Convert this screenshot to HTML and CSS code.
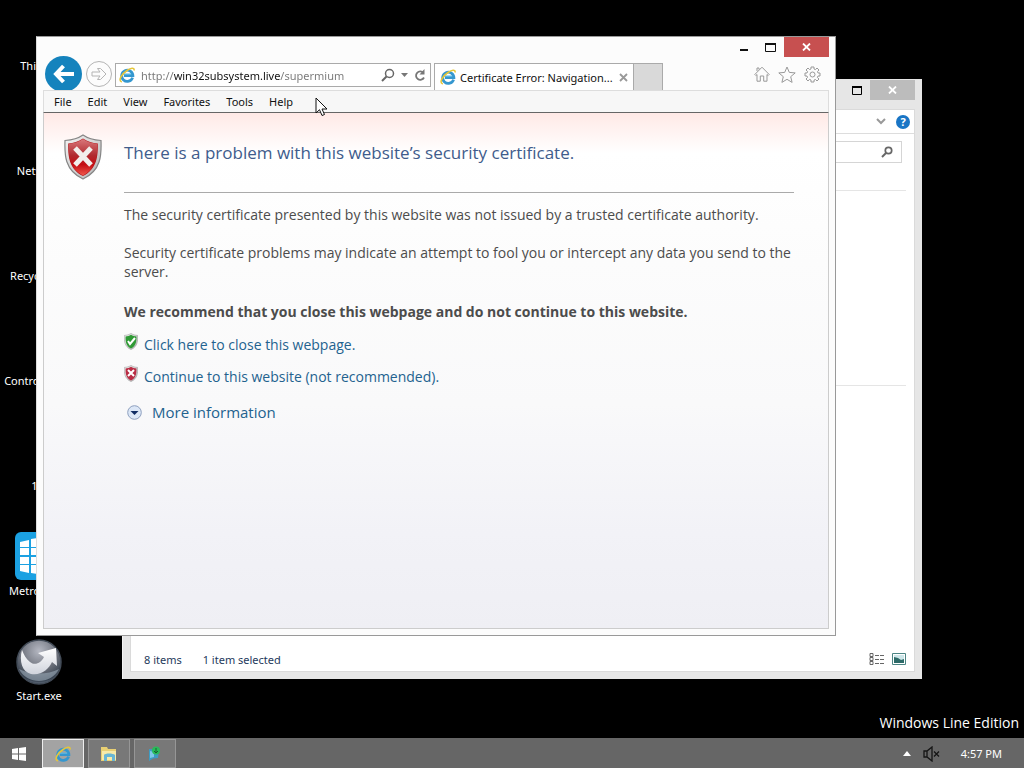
FILE: index.html
```html
<!DOCTYPE html>
<html lang="en">
<head>
  <meta charset="UTF-8">
  <meta name="viewport" content="width=device-width, initial-scale=1.0">
  <title>Certificate Error: Navigation Blocked</title>
  <link rel="stylesheet" href="styles.css">
</head>
<body>

  <!-- Shared icons -->
  <svg class="defs" width="0" height="0" aria-hidden="true">
    <defs>
      <linearGradient id="redFill" x1="0" y1="0" x2="0" y2="1">
        <stop offset="0" stop-color="#d9777a"/><stop offset="0.45" stop-color="#b02a2f"/><stop offset="0.7" stop-color="#c40d12"/><stop offset="1" stop-color="#f0584c"/>
      </linearGradient>
      <linearGradient id="rim" x1="0" y1="0" x2="1" y2="1">
        <stop offset="0" stop-color="#f4f4f4"/><stop offset="1" stop-color="#b4b4b4"/>
      </linearGradient>
      <radialGradient id="orb" cx="0.5" cy="0.25" r="0.8">
        <stop offset="0" stop-color="#b5b8c2"/><stop offset="0.5" stop-color="#71757f"/><stop offset="0.85" stop-color="#36414f"/><stop offset="1" stop-color="#8a98a8"/>
      </radialGradient>
      <linearGradient id="arrow" x1="0" y1="0" x2="0" y2="1">
        <stop offset="0" stop-color="#ffffff"/><stop offset="1" stop-color="#cfd3dc"/>
      </linearGradient>
      <symbol id="ie" viewBox="0 0 16 16">
        <path d="M13.6 10.6A5.6 5.6 0 1 1 13.9 8.7H5" fill="none" stroke="#3597cf" stroke-width="2.8"/>
        <path d="M4.6 7.2h7.6" stroke="#55b4e2" stroke-width="1.4"/>
        <path d="M2.2 14.6C-.8 13.4 2.6 7 8 3.5c4-2.6 7.2-3 7.1-.6" fill="none" stroke="#e5c63a" stroke-width="1.6" stroke-linecap="round"/>
      </symbol>
      <symbol id="shield" viewBox="0 0 38 46">
        <path d="M19 1C14 4.500 8 6 1 6.500c-.5 14-.5 30 18 38.500C37.500 36.500 37.500 20.500 37 6.500 30 6 24 4.500 19 1z" fill="url(#rim)" stroke="#858585" stroke-width="1.200"/>
        <path d="M19 4.500C14.500 7.500 9.500 9 4.200 9.400 4 22 5 35 19 42c14-7 15-20 14.800-32.600C28.500 9 23.500 7.500 19 4.500z" fill="currentColor"/>
      </symbol>
    </defs>
  </svg>

  <main class="desktop">

    <!-- Desktop shortcuts -->
    <ul class="shortcuts">
      <li><span class="pic"></span>This PC</li>
      <li><span class="pic"></span>Network</li>
      <li><span class="pic"></span>Recycle Bin</li>
      <li><span class="pic"></span>Control Panel</li>
      <li><span class="pic"></span>1.0</li>
      <li>
        <svg class="pic" viewBox="0 0 48 48"><rect width="48" height="48" rx="6" fill="#1ba1e2"/><path d="M5 10l9-2v7H5zM5 16h9v7H5zM5 25h9v7H5zM5 33h9v8l-9-2zM16 7l26-4v12H16zM16 16h26v7H16zM16 25h26v7H16zM16 33h26v12l-26-4z" fill="#fff"/></svg>
        Metro Apps
      </li>
      <li>
        <svg class="pic" viewBox="0 0 48 48">
          <circle cx="24" cy="25" r="22" fill="url(#orb)" stroke="#424b57" stroke-width="1.500"/>
          <path d="M4 32c8 16 32 16 40 0-12 6-28 6-40 0z" fill="#9dabb9" opacity=".6"/>
          <path d="M7 13C4 24 7 35 16 37c10 2 18-5 21-12l5 4-1-18-18 5 6 4c-3 6-9 9-14 5-4-3-6-7-8-12z" fill="url(#arrow)"/>
        </svg>
        Start.exe
      </li>
    </ul>

    <!-- File Explorer -->
    <section class="window explorer" aria-label="File Explorer">
      <div class="titlebar">
        <button class="caption" aria-label="Maximize"><svg width="10" height="9"><path d="M.5 1h9v7.500h-9z" fill="none" stroke="#000"/><path d="M0 1h10" stroke="#000" stroke-width="2"/></svg></button>
        <button class="caption close" aria-label="Close"><svg width="9" height="8"><path d="M1 .5l7 7M8 .5l-7 7" stroke="#fff" stroke-width="1.800"/></svg></button>
      </div>
      <div class="explorer-body">
        <div class="ribbon">
          <button class="icon-btn" aria-label="Expand the Ribbon"><svg width="10" height="7"><path d="M1 1l4 4 4-4" fill="none" stroke="#999" stroke-width="2"/></svg></button>
          <button class="icon-btn help" aria-label="Help">?</button>
        </div>
        <div class="search-row">
          <label class="search"><input type="search" aria-label="Search"><svg width="12" height="12"><circle cx="7.500" cy="4.500" r="3.200" fill="none" stroke="#666" stroke-width="1.700"/><path d="M5 7l-4 4" stroke="#666" stroke-width="2"/></svg></label>
        </div>
        <div class="group"></div>
        <div class="files"></div>
        <footer class="status">
          <span>8 items</span>
          <span>1 item selected</span>
          <button class="icon-btn details" aria-label="Details view"><svg width="16" height="13"><path d="M1 .5h3v3H1zM1 4.500h3v3H1zM1 8.500h3v3H1z" fill="none" stroke="#666"/><path d="M6 2.500h10M6 6.500h10M6 10.500h10" stroke="#666" stroke-dasharray="4 1"/></svg></button>
          <button class="icon-btn" aria-label="Large icons view"><svg width="14" height="12"><path d="M.5.500h13v11H.5z" fill="#fff" stroke="#4c8584"/><path d="M2 2h10v8H2z" fill="#cde6e9"/><path d="M2 4l4 1 3 2 3-1v4H2z" fill="#2d6a68"/></svg></button>
        </footer>
      </div>
    </section>

    <!-- Internet Explorer -->
    <section class="window browser" aria-label="Internet Explorer">
      <div class="titlebar">
        <button class="caption" aria-label="Minimize"><svg width="8" height="10"><path d="M0 8h8" stroke="#111" stroke-width="2"/></svg></button>
        <button class="caption" aria-label="Maximize"><svg width="11" height="9"><path d="M.5 1h10v7.500H.5z" fill="none" stroke="#111"/><path d="M0 1h11" stroke="#111" stroke-width="2"/></svg></button>
        <button class="caption close" aria-label="Close"><svg width="9" height="8"><path d="M1 .5l7 7M8 .5l-7 7" stroke="#fff" stroke-width="1.800"/></svg></button>
      </div>

      <div class="nav">
        <button class="back" aria-label="Back"><svg width="22" height="20" viewBox="0 0 22 20"><path d="M10.500 2L3 10l7.500 8M3 10h18" fill="none" stroke="#fff" stroke-width="4"/></svg></button>
        <button class="forward" aria-label="Forward"><svg width="16" height="14" viewBox="0 0 16 14"><path d="M1 5h8L6.500 1.500h3L15 7l-5.500 5.500h-3L9 9H1z" fill="none" stroke="#b4b4b4"/></svg></button>
        <div class="address">
          <svg width="16" height="16"><use href="#ie"/></svg>
          <input type="text" aria-label="Address" value="http://win32subsystem.live/supermium">
          <button class="icon-btn" aria-label="Search"><svg width="14" height="14"><circle cx="8.500" cy="5.500" r="4" fill="none" stroke="#666" stroke-width="1.500"/><path d="M5.500 8.500l-4.500 4.500" stroke="#666" stroke-width="2"/></svg></button>
          <button class="icon-btn" aria-label="Show address list"><svg width="7" height="4"><path d="M0 0h7L3.500 4z" fill="#777"/></svg></button>
          <button class="icon-btn" aria-label="Refresh"><svg width="12" height="13"><path d="M9.500 4A4.200 4.200 0 1 0 10 8.500" fill="none" stroke="#777" stroke-width="1.800"/><path d="M10.500 0v5.500H5.500z" fill="#777"/></svg></button>
        </div>
        <div class="tab">
          <svg width="16" height="16"><use href="#ie"/></svg>
          <span>Certificate Error: Navigation...</span>
          <button class="icon-btn" aria-label="Close tab"><svg width="9" height="9"><path d="M1 1l7 7M8 1L1 8" stroke="#999" stroke-width="1.800"/></svg></button>
        </div>
        <button class="new-tab" aria-label="New tab"></button>
        <div class="tools">
          <button class="icon-btn" aria-label="Home"><svg width="16" height="16"><path d="M.8 8.500L8 1.200l7.200 7.300-1 1-1.200-1v6.700H9.700V10H6.300v5.200H3V8.500l-1.200 1zM3 5V2h2v1.500" fill="none" stroke="#999"/></svg></button>
          <button class="icon-btn" aria-label="Favorites"><svg width="18" height="17"><path d="M9 1l2.300 5.400 5.900.5-4.500 3.800 1.400 5.700L9 13.300l-5.100 3.100 1.400-5.700L.8 6.900l5.900-.5z" fill="none" stroke="#999"/></svg></button>
          <button class="icon-btn" aria-label="Tools"><svg width="17" height="17"><path d="M7 1h3v2l1.500.6L13 2l2 2-1.500 1.600.6 1.400H16v3h-2l-.6 1.500L15 13l-2 2-1.500-1.500-1.500.6V16H7v-2l-1.500-.6L4 15l-2-2 1.500-1.500L3 10H1V7h2l.6-1.500L2 4l2-2 1.500 1.500L7 3z" fill="none" stroke="#999"/><circle cx="8.500" cy="8.500" r="2.500" fill="none" stroke="#999"/></svg></button>
        </div>
      </div>

      <div class="menubar">
        <button>File</button>
        <button>Edit</button>
        <button>View</button>
        <button>Favorites</button>
        <button>Tools</button>
        <button>Help</button>
      </div>

      <div class="page">
        <svg class="big-shield" width="38" height="46" viewBox="0 0 38 46"><use href="#shield" color="#b5161b"/><path d="M19 5C14.500 8 9.500 9.500 4.700 9.800 4.500 22 5.500 34.500 19 41.500 32.500 34.500 33.500 22 33.300 9.800 28.500 9.500 23.500 8 19 5z" fill="url(#redFill)"/><path d="M11 14l16 17M27 14L11 31" stroke="#f2efec" stroke-width="5"/></svg>
        <div class="message">
          <h1>There is a problem with this website’s security certificate.</h1>
          <hr>
          <p>The security certificate presented by this website was not issued by a trusted certificate authority.</p>
          <p>Security certificate problems may indicate an attempt to fool you or intercept any data you send to the server.</p>
          <p class="advice">We recommend that you close this webpage and do not continue to this website.</p>
          <div class="choice">
            <svg width="14" height="17"><use href="#shield" color="#2f9a35"/><path d="M4 8l2 3 5-6" fill="none" stroke="#fff" stroke-width="2"/></svg>
            <a href="#close">Click here to close this webpage.</a>
          </div>
          <div class="choice">
            <svg width="14" height="17"><use href="#shield" color="#b92c44"/><path d="M4 5l6 6M10 5l-6 6" stroke="#fff" stroke-width="2"/></svg>
            <a href="#continue">Continue to this website (not recommended).</a>
          </div>
          <div class="more">
            <svg width="15" height="15"><circle cx="7.500" cy="7.500" r="6.800" fill="#dce7f7" stroke="#8d9fbe"/><path d="M3.500 6h8l-4 4z" fill="#102c64"/></svg>
            <a href="#more">More information</a>
          </div>
        </div>
      </div>
    </section>

    <div class="edition">Windows Line Edition</div>

    <svg class="pointer" width="13" height="20"><path d="M1 1v15l3.500-3.300L7 18.500l2.500-1L7 12h5z" fill="#fff" stroke="#111"/></svg>
  </main>

  <!-- Taskbar -->
  <nav class="taskbar" aria-label="Taskbar">
    <button class="start" aria-label="Start"><svg width="14" height="14"><path d="M0 2l6-1v5.500H0zM7 1l7-1v6.500H7zM0 7.500h6V13l-6-1zM7 7.500h7V14l-7-1z" fill="#fff"/></svg></button>
    <button class="task active" aria-label="Internet Explorer"><svg width="16" height="16"><use href="#ie"/></svg></button>
    <button class="task" aria-label="File Explorer"><svg width="18" height="16"><path d="M1 1h6l1 2h8v12H1z" fill="#e8cf73"/><path d="M2 5h14v9H2z" fill="#f7eaa9"/><path d="M4 15V9c1-2 9-2 11 0v6h-3v-4H7v4z" fill="#68b6d5"/></svg></button>
    <button class="task" aria-label="Supermium"><svg width="16" height="16"><path d="M2 3l10 1-1 8-5 .5L2 15z" fill="#3d9cc4"/><path d="M3 5l4 1v5l-4 1z" fill="#7cc8e6"/><circle cx="9" cy="4.500" r="4" fill="#28bb5a"/><path d="M9 2v5M7 5l2 2 2-2" fill="none" stroke="#17602f"/></svg></button>
    <div class="tray">
      <button class="icon-btn" aria-label="Show hidden icons"><svg width="8" height="5"><path d="M0 5h8L4 0z" fill="#fff"/></svg></button>
      <button class="icon-btn" aria-label="Volume muted"><svg width="17" height="16"><path d="M1 5h3l5-4v14l-5-4H1zM4 5v6" fill="none" stroke="#151515" stroke-width="1.300"/><path d="M11 5.500l5 5M16 5.500l-5 5" stroke="#151515" stroke-width="1.300"/></svg></button>
      <time datetime="16:57">4:57 PM</time>
    </div>
  </nav>

</body>
</html>
```
FILE: styles.css
```css
* {
  box-sizing: border-box;
}
body {
  margin: 0;
  height: 100vh;
  display: flex;
  flex-direction: column;
  overflow: hidden;
  background: #000;
  color: #111;
  font-family: "Noto Sans", "Open Sans", sans-serif;
  font-size: 11px;
}
button {
  display: flex;
  align-items: center;
  justify-content: center;
  padding: 0;
  border: none;
  background: none;
  color: inherit;
  font: inherit;
}
input {
  min-width: 0;
  padding: 0;
  border: none;
  outline: none;
  background: none;
  font: inherit;
}
svg {
  display: block;
  flex: none;
}
.defs {
  position: absolute;
}

/* Desktop */
.desktop {
  position: relative;
  flex: 1;
}
.shortcuts {
  display: flex;
  flex-direction: column;
  gap: 35px;
  width: 78px;
  margin: 0;
  padding: 7px 0 0;
  list-style: none;
  color: #fff;
  line-height: 22px;
  text-align: center;
  white-space: nowrap;
}
.pic {
  display: block;
  width: 48px;
  height: 48px;
  margin: 0 auto;
}
.edition {
  position: absolute;
  right: 5px;
  bottom: 5px;
  color: #fff;
  font-family: "Open Sans", sans-serif;
  font-size: 14px;
  line-height: 20px;
}
.pointer {
  position: absolute;
  left: 315px;
  top: 97px;
}

/* Windows */
.window {
  position: absolute;
  display: flex;
  flex-direction: column;
}
.titlebar {
  display: flex;
  justify-content: flex-end;
}
.caption {
  width: 27px;
  height: 20px;
}
.close {
  width: 45px;
}

/* File Explorer */
.explorer {
  left: 122px;
  right: 102px;
  top: 79px;
  bottom: 59px;
  padding: 1px 7px 7px;
  border: 1px solid #f4f4f4;
  border-width: 0 0 0 1px;
  background: #e6e6e6;
}
.explorer .caption {
  margin-bottom: 9px;
}
.explorer .close {
  background: #bcbcbc;
}
.explorer-body {
  flex: 1;
  display: flex;
  flex-direction: column;
  border: 1px solid #dadada;
  background: #fff;
}
.ribbon {
  display: flex;
  align-items: center;
  justify-content: flex-end;
  gap: 10px;
  height: 24px;
  padding-right: 4px;
  border-bottom: 1px solid #ddd;
}
.help {
  width: 14px;
  height: 14px;
  border-radius: 50%;
  background: #1975c5;
  color: #fff;
  font-weight: bold;
}
.search-row {
  display: flex;
  justify-content: flex-end;
  padding: 7px 12px 0;
}
.search {
  display: flex;
  align-items: center;
  height: 22px;
  padding-right: 8px;
  border: 1px solid #d5d5d5;
}
.group {
  height: 196px;
  margin: 27px 8px 0;
  border: 1px solid #e5e5e5;
  border-width: 1px 0;
}
.files {
  flex: 1;
}
.status {
  display: flex;
  align-items: center;
  gap: 21px;
  height: 24px;
  padding: 0 8px 0 13px;
  color: #1e395b;
}
.details {
  margin: 0 -14px 0 auto;
}

/* Internet Explorer */
.browser {
  left: 36px;
  right: 188px;
  top: 36px;
  bottom: 102px;
  padding: 0 6px 6px;
  border: 1px solid #999;
  border-left-color: #ddd;
  background: #fcfcfc;
}
.browser .titlebar {
  height: 19px;
}
.browser .close {
  background: #c75050;
}
.nav {
  display: flex;
  align-items: flex-end;
  height: 34px;
  padding-left: 2px;
  overflow: hidden;
}
.back {
  width: 37px;
  height: 36px;
  margin-bottom: -2px;
  border-radius: 50%;
  background: #1583bd;
}
.forward {
  width: 26px;
  height: 26px;
  margin: 0 3px 3px 4px;
  border: 1px solid #b4b4b4;
  border-radius: 50%;
}
.address {
  flex: 306;
  display: flex;
  align-items: center;
  gap: 7px;
  height: 24px;
  margin: 0 3px 3px 0;
  padding: 0 5px 0 3px;
  border: 1px solid #aaa;
  background: #fff;
}
.address svg {
  margin-right: -1px;
}
/* the host name is darker than the rest of the address */
.address input {
  flex: 1;
  height: 20px;
  background: linear-gradient(90deg, #777 33px, #111 33px, #111 139px, #777 139px);
  background-clip: text;
  -webkit-background-clip: text;
  color: transparent;
}
.tab {
  flex: 188;
  display: flex;
  align-items: center;
  gap: 4px;
  min-width: 0;
  height: 27px;
  padding: 0 5px;
  border: 1px solid #aaa;
  border-bottom: none;
  background: #fff;
}
.tab span {
  flex: 1;
  white-space: nowrap;
}
.new-tab {
  width: 29px;
  height: 27px;
  border: 1px solid #aaa;
  border-width: 1px 1px 0 0;
  background: #d9d9d9;
}
.tools {
  flex: 158;
  display: flex;
  justify-content: flex-end;
  align-items: center;
  gap: 8px;
  height: 32px;
  padding-right: 8px;
}
.menubar {
  display: flex;
  gap: 16px;
  height: 23px;
  padding-left: 10px;
  border: 1px solid #ddd;
  border-bottom-color: #666;
  background: #f7f7f7;
}
.page {
  flex: 1;
  display: flex;
  align-items: flex-start;
  gap: 22px;
  padding: 21px 34px 0 20px;
  border: 1px solid #ccc;
  border-top: none;
  background: linear-gradient(#ffe9e6, #fff 40px, #fcfcfc 150px, #f9f9fa 290px, #f2f2f7 420px, #efeff4);
}
.message {
  flex: 1;
  color: #4c4c4c;
  font-family: "Open Sans", sans-serif;
  font-size: 14px;
  line-height: 19px;
}
.message h1 {
  margin: 6px 0 0;
  color: #405c8c;
  font-size: 17px;
  font-weight: normal;
  line-height: 26px;
}
.message hr {
  margin: 26px 0 12px;
  border: none;
  border-top: 1px solid #aaa;
}
.message p {
  margin: 0 0 19px;
}
.message .advice {
  margin: 21px 0 12px;
  font-weight: bold;
}
.message a {
  color: #23628f;
  text-decoration: none;
}
.choice {
  display: flex;
  gap: 6px;
  height: 32px;
}
.choice a {
  padding-top: 2px;
}
.more {
  display: flex;
  align-items: center;
  gap: 10px;
  margin-top: 6px;
  padding-left: 3px;
  font-size: 15px;
}

/* Taskbar */
.taskbar {
  display: flex;
  gap: 4px;
  height: 30px;
  padding: 1px 22px 0 0;
  background: #666;
  color: #fff;
}
.start {
  width: 38px;
}
.task {
  width: 42px;
  border: 1px solid #969696;
  background: #787878;
}
.active {
  border-color: #eee;
  background: #a3a3a3;
}
.tray {
  display: flex;
  align-items: center;
  gap: 12px;
  margin-left: auto;
}
.tray time {
  margin-left: 9px;
}
```
